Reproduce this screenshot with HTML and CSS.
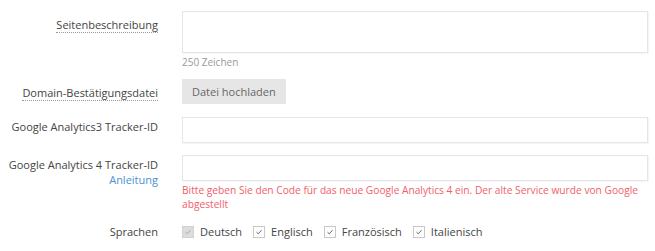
FILE: index.html
```html
<!DOCTYPE html>
<html>
<head>
  <title>Seiteneinstellungen</title>
  <meta charset="UTF-8">
  <meta name="viewport" content="width=device-width, initial-scale=1.0">
  <link rel="stylesheet" href="styles.css">
</head>
<body>
  <form class="settings">
    <div class="row row-desc">
      <div class="label label-tall"><span class="hint-label">Seitenbeschreibung</span></div>
      <div class="control">
        <textarea class="field field-area"></textarea>
        <div class="counter">250 Zeichen</div>
      </div>
    </div>

    <div class="row row-file">
      <div class="label label-tall"><span class="hint-label">Domain-Bestätigungsdatei</span></div>
      <div class="control">
        <button type="button" class="upload-btn">Datei hochladen</button>
      </div>
    </div>

    <div class="row row-ga3">
      <div class="label">Google Analytics3 Tracker-ID</div>
      <div class="control">
        <input type="text" class="field">
      </div>
    </div>

    <div class="row row-ga4">
      <div class="label">
        Google Analytics 4 Tracker-ID<br>
        <a href="#" class="help-link">Anleitung</a>
      </div>
      <div class="control">
        <input type="text" class="field">
        <div class="error">Bitte geben Sie den Code für das neue Google Analytics 4 ein. Der alte Service wurde von Google abgestellt</div>
      </div>
    </div>

    <div class="row row-lang">
      <div class="label label-lang">Sprachen</div>
      <div class="control langs">
        <label class="check disabled">
          <span class="box"><svg viewBox="0 0 12 12"><path d="M3 6.2 L5.1 8.2 L9 3.8"/></svg></span>Deutsch
        </label>
        <label class="check">
          <span class="box"><svg viewBox="0 0 12 12"><path d="M3 6.2 L5.1 8.2 L9 3.8"/></svg></span>Englisch
        </label>
        <label class="check">
          <span class="box"><svg viewBox="0 0 12 12"><path d="M3 6.2 L5.1 8.2 L9 3.8"/></svg></span>Französisch
        </label>
        <label class="check">
          <span class="box"><svg viewBox="0 0 12 12"><path d="M3 6.2 L5.1 8.2 L9 3.8"/></svg></span>Italienisch
        </label>
      </div>
    </div>
  </form>
</body>
</html>
```

FILE: styles.css
```css
body {
  margin: 0;
  background: #fff;
  font-family: "Open Sans", "Liberation Sans", sans-serif;
  font-size: 11px;
  color: #444;
}
.settings {
  width: 648px;
  padding-top: 11px;
}
.row {
  display: grid;
  grid-template-columns: 158px 1fr;
  column-gap: 24px;
}
.row-desc { margin-bottom: 10px; }
.row-file { margin-bottom: 13px; }
.row-ga3 { margin-bottom: 12px; }
.row-ga4 { margin-bottom: 13px; }
.label {
  text-align: right;
  line-height: 14.5px;
  padding-top: 3px;
}
.label-tall {
  line-height: 16px;
  padding-top: 6px;
}
.label-lang {
  line-height: 16px;
  padding-top: 0;
}
.hint-label {
  border-bottom: 1px dotted #999;
}
.help-link {
  color: #4a90d9;
  text-decoration: none;
}
.field {
  display: block;
  box-sizing: border-box;
  width: 100%;
  height: 26px;
  margin: 0;
  border: 1px solid #e6e6e6;
  box-shadow: 1px 1px 1px rgba(0,0,0,0.04);
  background: #fff;
  font: inherit;
  padding: 4px 6px;
  outline: none;
}
.field-area {
  height: 42px;
  resize: none;
}
.counter {
  margin-top: 2px;
  font-size: 10px;
  line-height: 14px;
  color: #9a9a9a;
}
.upload-btn {
  display: block;
  height: 25px;
  padding: 0 10px;
  border: none;
  background: #e6e6e6;
  color: #666;
  font: inherit;
  cursor: pointer;
}
.error {
  margin-top: 3px;
  font-size: 10.2px;
  line-height: 13.5px;
  color: #f0606a;
}
.langs {
  display: flex;
  align-items: center;
  height: 16px;
}
.check {
  display: inline-flex;
  align-items: center;
  gap: 6px;
  margin-right: 11px;
  line-height: 16px;
}
.box {
  box-sizing: border-box;
  width: 12px;
  height: 12px;
  border: 1px solid #c8c8c8;
  background: #fff;
  display: inline-block;
}
.box svg {
  display: block;
  width: 10px;
  height: 10px;
  fill: none;
  stroke: #666;
  stroke-width: 1.2;
}
.check.disabled .box {
  background: #dcdcdc;
  border-color: #d0d0d0;
}
.check.disabled .box svg {
  stroke: #aaa;
}
```
